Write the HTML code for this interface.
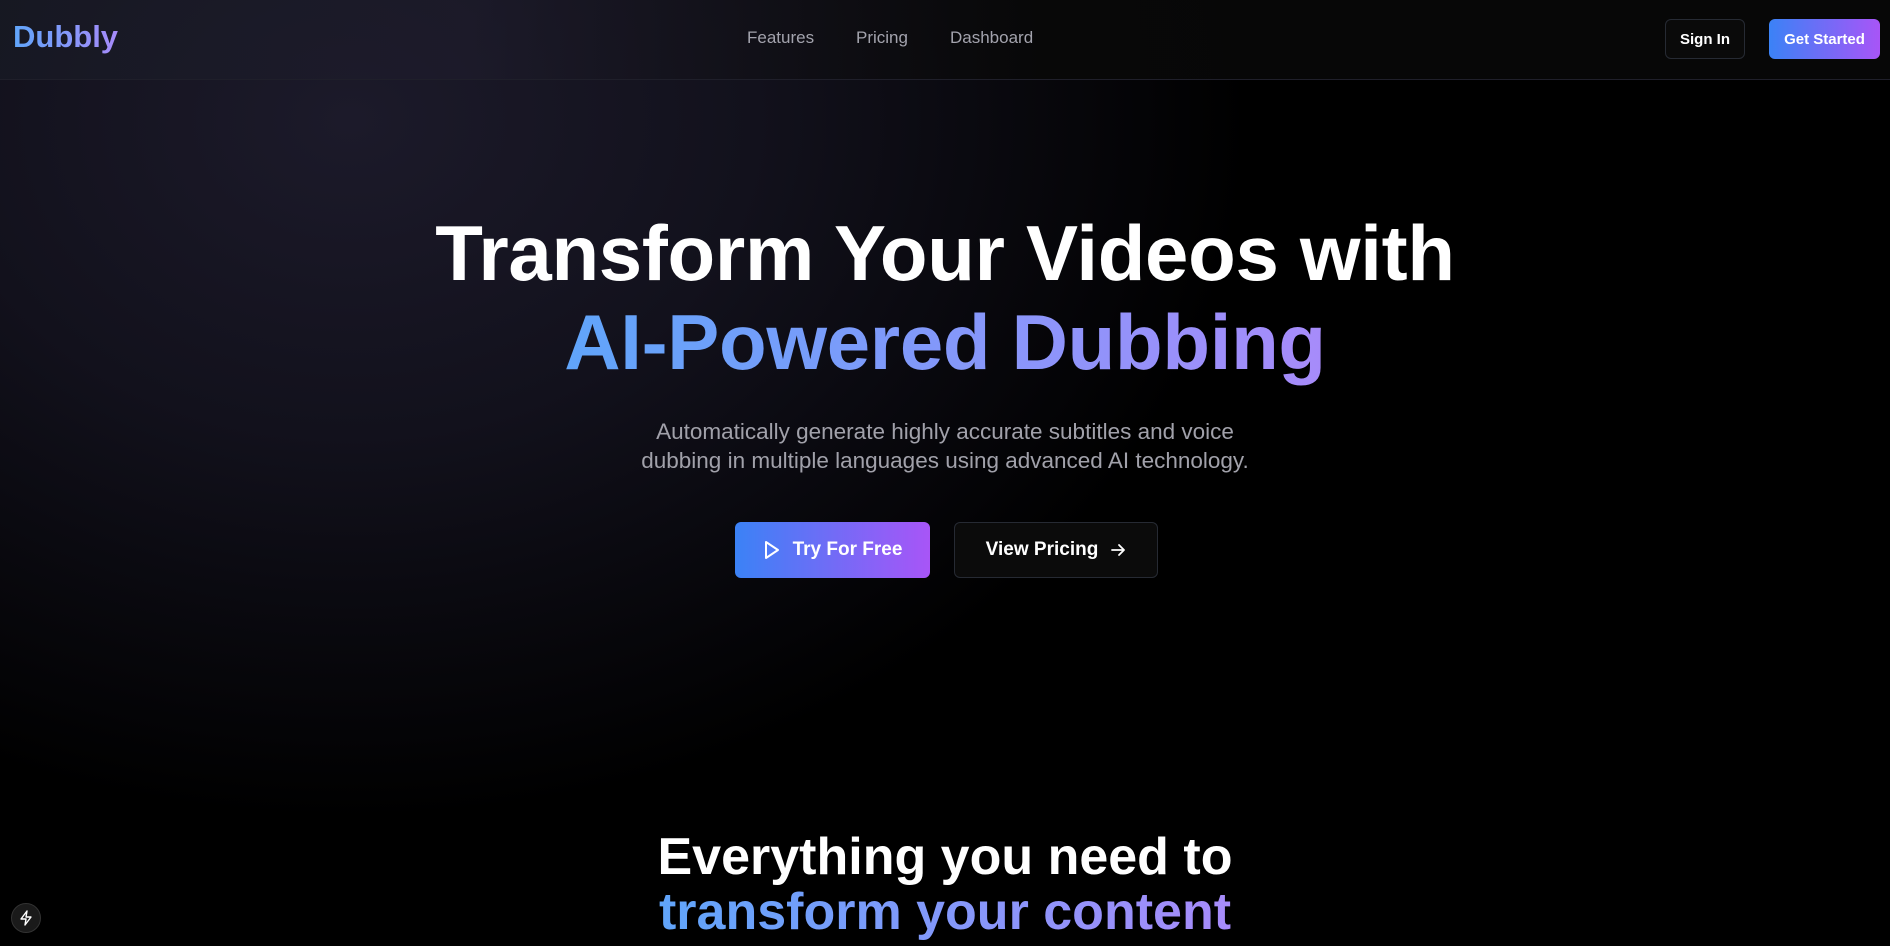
<!DOCTYPE html>
<html><head><meta charset="utf-8"><style>
*{margin:0;padding:0;box-sizing:border-box}
html,body{width:1890px;height:946px;overflow:hidden;background:#000;font-family:"Liberation Sans",sans-serif;color:#fff}
.bg{position:absolute;inset:0;background:radial-gradient(ellipse 900px 700px at 350px 120px,#1c1a2a 0%,#12111c 45%,rgba(0,0,0,0) 100%),#000}
header{position:absolute;left:0;top:0;width:1890px;height:80px;border-bottom:1px solid #1f1f2a;background:linear-gradient(90deg,rgba(25,28,38,.6),rgba(30,28,44,.6) 25%,rgba(8,8,8,.9) 55%,#070707)}
.logo{position:absolute;left:13px;top:19px;font-size:31px;font-weight:bold;background:linear-gradient(90deg,#60a5fa,#a78bfa);-webkit-background-clip:text;color:transparent}
nav a{position:absolute;top:28px;font-size:17px;color:#a3a3ad;text-decoration:none}
.btn{position:absolute;border-radius:6px;font-size:15px;font-weight:bold;display:flex;align-items:center;justify-content:center}
h1{position:absolute;left:0;width:1890px;text-align:center;font-size:78px;font-weight:bold;letter-spacing:-0.3px}
.grad{background:linear-gradient(90deg,#60a5fa,#a78bfa);-webkit-background-clip:text;color:transparent}
p.sub{position:absolute;left:0;width:1890px;top:417px;text-align:center;font-size:22.5px;line-height:29px;color:#a1a1aa}
h2{position:absolute;left:0;width:1890px;text-align:center;font-size:52px;font-weight:bold;line-height:55px;top:830px}
</style></head><body>
<div class="bg"></div>
<header>
<div class="logo">Dubbly</div>
<nav><a style="left:747px">Features</a><a style="left:856px">Pricing</a><a style="left:950px">Dashboard</a></nav>
<div class="btn" style="left:1665px;top:19px;width:80px;height:40px;border:1px solid #262a33;background:#0a0a0a">Sign In</div>
<div class="btn" style="left:1769px;top:19px;width:111px;height:40px;background:linear-gradient(90deg,#3b82f6,#a855f7)">Get Started</div>
</header>
<h1 style="top:208px">Transform Your Videos with</h1>
<h1 style="top:297px"><span class="grad">AI-Powered Dubbing</span></h1>
<p class="sub">Automatically generate highly accurate subtitles and voice<br>dubbing in multiple languages using advanced AI technology.</p>
<div class="btn" style="left:735px;top:522px;width:195px;height:56px;background:linear-gradient(90deg,#3b82f6,#a855f7);font-size:19px">
<svg width="18" height="20" viewBox="0 0 18 20" style="margin-right:12px"><path d="M3 2 L15 10 L3 18 Z" fill="none" stroke="#fff" stroke-width="2" stroke-linejoin="round"/></svg>Try For Free</div>
<div class="btn" style="left:954px;top:522px;width:204px;height:56px;background:#0b0b0b;border:1px solid #262a33;font-size:19px">View Pricing
<svg width="16" height="16" viewBox="0 0 16 16" style="margin-left:12px"><path d="M2 8 H14 M9 3 L14 8 L9 13" fill="none" stroke="#fff" stroke-width="1.8" stroke-linecap="round" stroke-linejoin="round"/></svg></div>
<h2>Everything you need to<br><span class="grad">transform your content</span></h2>
<div style="position:absolute;left:11px;top:903px;width:30px;height:30px;border-radius:50%;background:#1a1a1a;border:1px solid #333;display:flex;align-items:center;justify-content:center">
<svg width="14" height="16" viewBox="0 0 14 16"><path d="M8 1 L2 9 H7 L6 15 L12 7 H7 Z" fill="none" stroke="#fff" stroke-width="1.4" stroke-linejoin="round"/></svg></div>
</body></html>
